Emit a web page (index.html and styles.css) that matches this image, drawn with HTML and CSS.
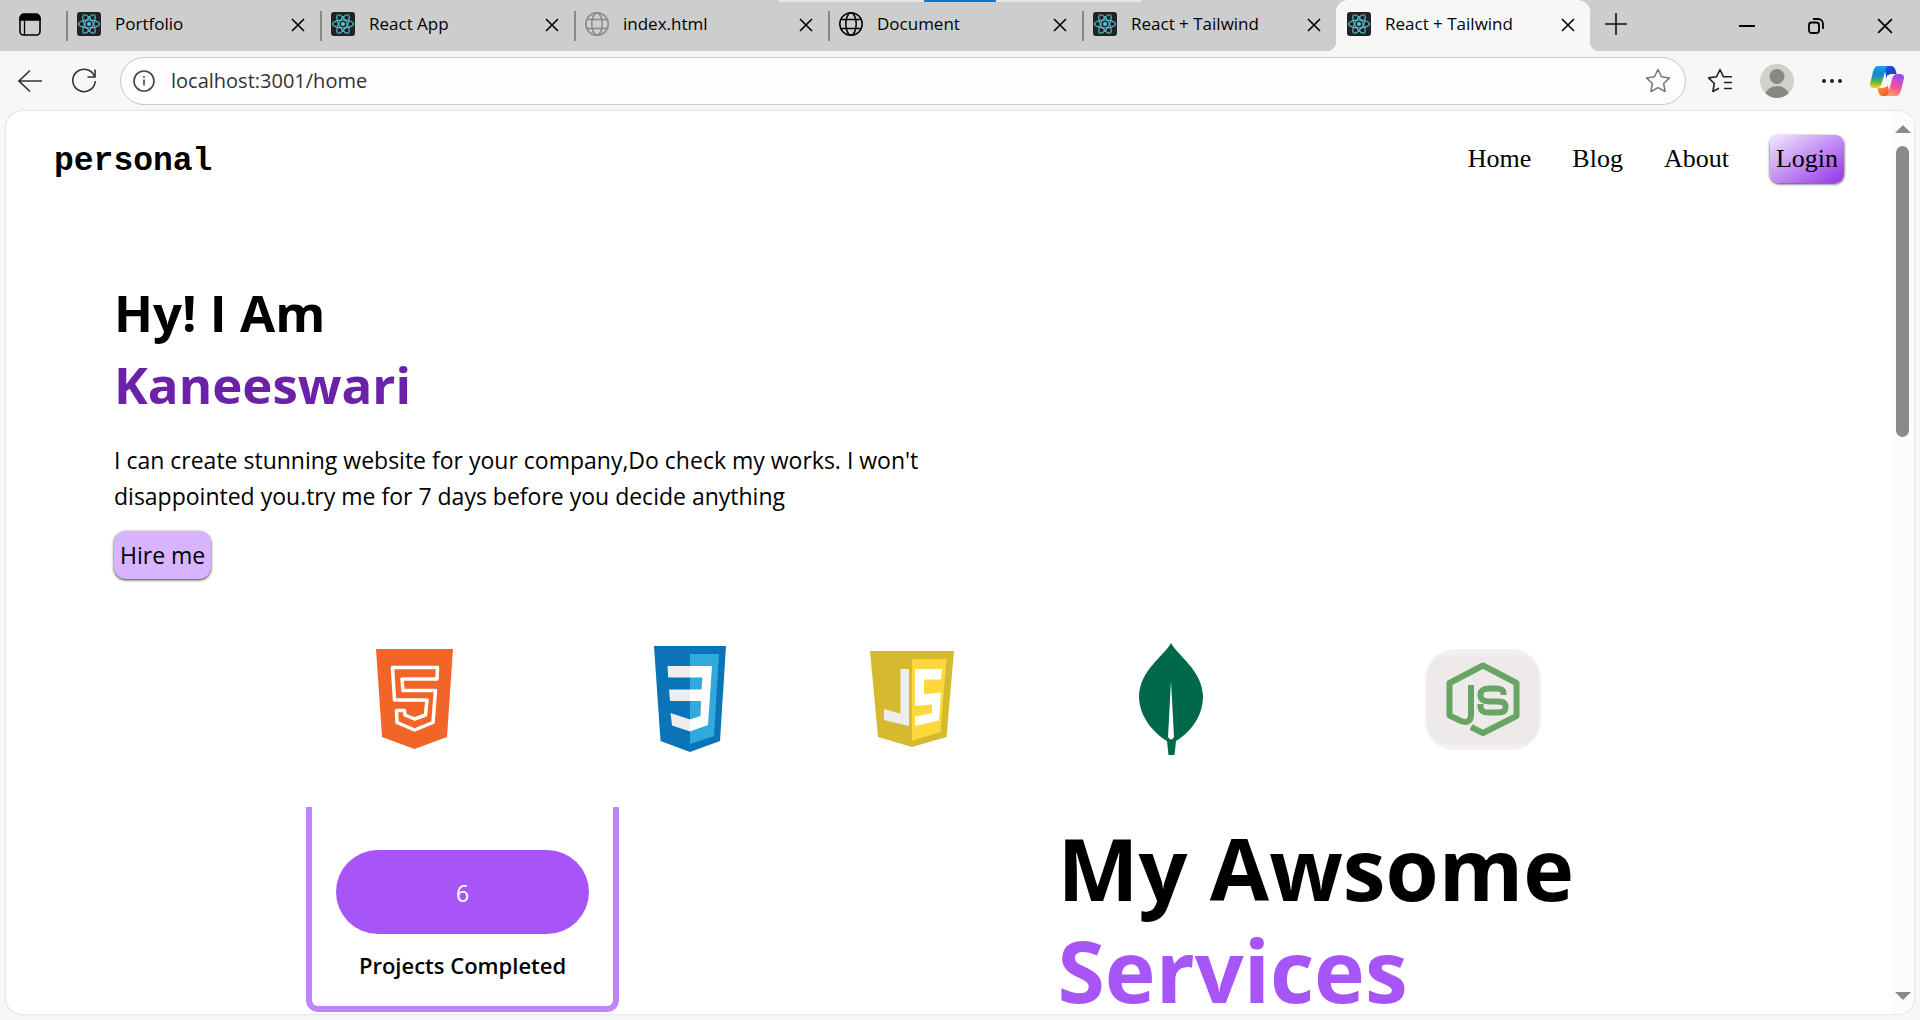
FILE: index.html
```html
<!DOCTYPE html>
<html lang="en">
<head>
<meta charset="utf-8">
<title>React + Tailwind</title>
<link rel="stylesheet" href="styles.css">
</head>
<body>
<svg class="sprite" aria-hidden="true">
  <symbol id="react" viewBox="0 0 24 24">
    <rect width="24" height="24" rx="3" fill="#222"/>
    <g fill="none" stroke="#58c4dc" stroke-width="1.1">
      <ellipse cx="12" cy="12" rx="10.4" ry="4"/>
      <ellipse cx="12" cy="12" rx="10.4" ry="4" transform="rotate(60 12 12)"/>
      <ellipse cx="12" cy="12" rx="10.4" ry="4" transform="rotate(120 12 12)"/>
    </g>
    <circle cx="12" cy="12" r="2" fill="#58c4dc"/>
  </symbol>
  <symbol id="globe" viewBox="0 0 24 24">
    <g fill="none" stroke="currentColor" stroke-width="1.5">
      <circle cx="12" cy="12" r="11.2"/>
      <ellipse cx="12" cy="12" rx="5.2" ry="11.2"/>
      <path d="M2 7.5h20M2 16.5h20"/>
    </g>
  </symbol>
  <symbol id="cross" viewBox="0 0 14 14">
    <path d="M1 1l12 12M13 1L1 13" fill="none" stroke="currentColor" stroke-width="1.6"/>
  </symbol>
</svg>

<div class="tabbar">
  <div class="load-track"><span class="load-mark"></span></div>
  <button class="bare workspace" aria-label="Tab actions">
    <svg width="22" height="24" viewBox="0 0 22 24"><rect x="1" y="2" width="20" height="20" rx="3.5" fill="none" stroke="#000" stroke-width="1.6"/><path d="M1 7V5a4 4 0 0 1 4-4h12a4 4 0 0 1 4 4v2zM5.500 7v15" stroke="#000" stroke-width="1.300"/></svg>
  </button>
  <div class="tab"><svg class="favicon"><use href="#react"/></svg><span class="tab-title">Portfolio</span><button class="bare" aria-label="Close tab"><svg class="x"><use href="#cross"/></svg></button></div>
  <div class="tab"><svg class="favicon"><use href="#react"/></svg><span class="tab-title">React App</span><button class="bare" aria-label="Close tab"><svg class="x"><use href="#cross"/></svg></button></div>
  <div class="tab"><svg class="favicon muted"><use href="#globe"/></svg><span class="tab-title">index.html</span><button class="bare" aria-label="Close tab"><svg class="x"><use href="#cross"/></svg></button></div>
  <div class="tab"><svg class="favicon"><use href="#globe"/></svg><span class="tab-title">Document</span><button class="bare" aria-label="Close tab"><svg class="x"><use href="#cross"/></svg></button></div>
  <div class="tab"><svg class="favicon"><use href="#react"/></svg><span class="tab-title">React + Tailwind</span><button class="bare" aria-label="Close tab"><svg class="x"><use href="#cross"/></svg></button></div>
  <div class="tab active"><svg class="favicon"><use href="#react"/></svg><span class="tab-title">React + Tailwind</span><button class="bare" aria-label="Close tab"><svg class="x"><use href="#cross"/></svg></button></div>
  <button class="bare new-tab" aria-label="New tab"><svg width="22" height="22" viewBox="0 0 22 22"><path d="M11 0v22M0 11h22" stroke="#111" stroke-width="1.6"/></svg></button>
  <div class="window-controls">
    <button class="bare" aria-label="Minimize"><svg width="16" height="16" viewBox="0 0 16 16"><path d="M0 8h16" stroke="#000" stroke-width="2"/></svg></button>
    <button class="bare" aria-label="Restore"><svg width="16" height="16" viewBox="0 0 16 16" fill="none" stroke="#000" stroke-width="1.800"><rect x="1" y="4.500" width="10" height="10.500" rx="2.500"/><path d="M5 1h5a5 5 0 0 1 5 5v5"/></svg></button>
    <button class="bare" aria-label="Close"><svg width="16" height="16"><use href="#cross"/></svg></button>
  </div>
</div>

<div class="toolbar">
  <button class="bare" aria-label="Back"><svg width="24" height="24" viewBox="0 0 24 24" fill="none" stroke="#333" stroke-width="1.600"><path d="M12 1.500L1 12l11 10.500M1 12h23"/></svg></button>
  <button class="bare" aria-label="Refresh"><svg width="24" height="26" viewBox="0 0 24 26" fill="none" stroke="#333" stroke-width="1.600"><path d="M22.500 8.500A11.200 11.200 0 1 0 23.200 13M23 1.500v7.500h-7.500"/></svg></button>
  <div class="omnibox">
    <svg width="22" height="22" viewBox="0 0 22 22" fill="none" stroke="#444" stroke-width="1.600"><circle cx="11" cy="11" r="10"/><path d="M11 9.500v6M11 6v1.800"/></svg>
    <input class="address" type="text" aria-label="Address" value="localhost:3001/home">
    <button class="bare" aria-label="Add to favorites"><svg width="26" height="26" viewBox="0 0 26 26"><path d="M13 1.500l3.500 7.300 8 1.100-5.800 5.600 1.400 8-7.100-3.800-7.100 3.800 1.400-8L1.500 9.900l8-1.100z" fill="none" stroke="#777" stroke-width="1.500" stroke-linejoin="round"/></svg></button>
  </div>
  <div class="toolbar-actions">
    <button class="bare" aria-label="Favorites"><svg width="24" height="26" viewBox="1 0 24 26" fill="none" stroke="#222" stroke-width="1.600" stroke-linejoin="round"><path d="M18 8.800h-1.500L13 1.500 9.500 8.800l-8 1.100 5.800 5.600-1.400 8 6-3.200M17 8.800h8M17 14.500h8M17 20.500h8"/></svg></button>
    <button class="bare" aria-label="Profile"><svg width="34" height="34" viewBox="0 0 34 34"><defs><clipPath id="face"><circle cx="17" cy="17" r="17"/></clipPath></defs><g clip-path="url(#face)"><rect width="34" height="34" fill="#d2d0cc"/><circle cx="17" cy="12.500" r="7.500" fill="#8a8886"/><ellipse cx="17" cy="32" rx="12" ry="10" fill="#8a8886"/></g></svg></button>
    <button class="bare" aria-label="Settings and more"><svg width="20" height="8" viewBox="0 0 20 8" fill="#222"><circle cx="2" cy="4" r="2"/><circle cx="10" cy="4" r="2"/><circle cx="18" cy="4" r="2"/></svg></button>
    <button class="bare" aria-label="Copilot"><svg width="34" height="30" viewBox="0 0 34 30">
      <defs>
        <linearGradient id="cpa" x1="0" y1="0" x2="0" y2="1"><stop offset="0" stop-color="#1a9cf0"/><stop offset=".4" stop-color="#1287d8"/><stop offset=".7" stop-color="#57b64f"/><stop offset="1" stop-color="#ffd500"/></linearGradient>
        <linearGradient id="cpb" x1="0.300" y1="0" x2="0" y2="1"><stop offset="0" stop-color="#a04df0"/><stop offset=".45" stop-color="#f0509a"/><stop offset="1" stop-color="#ffab5c"/></linearGradient>
        <linearGradient id="cpc" x1="0" y1="0" x2="1" y2="1"><stop offset="0" stop-color="#1e50e0"/><stop offset="1" stop-color="#1a3fb8"/></linearGradient>
        <linearGradient id="cpd" x1="0" y1="0" x2="1" y2="1"><stop offset="0" stop-color="#ffb028"/><stop offset="1" stop-color="#e8452c"/></linearGradient>
      </defs>
      <path d="M14 0h7c3 0 4 2 4.800 5l.8 3h-5c-3 0-4 2-5 5z" fill="url(#cpc)"/>
      <path d="M20 30h-7c-3 0-4-2-4.800-5L7.400 22h5c3 0 4-2 5-5z" fill="url(#cpd)"/>
      <path d="M8 0h11c-2 0-3 2-3.800 5l-3.600 13c-.8 2.600-2 4-5 4H4c-3 0-4.600-2-3.800-5l3-12C4.200 2 5.500 0 8 0z" fill="url(#cpa)"/>
      <path d="M26 30H15c2 0 3-2 3.800-5l3.600-13c.8-2.600 2-4 5-4H30c3 0 4.600 2 3.800 5l-3 12c-1 3-2.300 5-4.800 5z" fill="url(#cpb)"/>
      <path d="M17.500 9h4.500c-1.200 1-1.800 2-2.200 3.500L17 21h-4.500c1.200-1 1.700-2 2.100-3.500z" fill="#f7f7f7"/>
    </svg></button>
  </div>
</div>

<div class="viewport">
  <div class="page">
    <header class="site-header">
      <a class="brand" href="#">personal</a>
      <nav class="site-nav">
        <a href="#">Home</a>
        <a href="#">Blog</a>
        <a href="#">About</a>
        <button class="btn login">Login</button>
      </nav>
    </header>

    <section class="hero">
      <h1>Hy! I Am<br><span class="name">Kaneeswari</span></h1>
      <p>I can create stunning website for your company,Do check my works. I won't<br>disappointed you.try me for 7 days before you decide anything</p>
      <button class="btn hire">Hire me</button>
    </section>

    <ul class="skills">
      <li><svg width="77" height="100" viewBox="0 0 77 100" role="img" aria-label="HTML5"><path d="M0 0h77l-6 88-32.500 12L6 88z" fill="#f16529"/><path d="M61.500 18.500H16.500l2 32.500h32.500l-1.500 15-11 4-9.500-4-.5-4.500h-8l.5 12L38.500 81l18.500-7.500 2.500-32H27L26 30h35z" fill="none" stroke="#fff" stroke-width="3.500" stroke-linejoin="round"/></svg></li>
      <li><svg width="72" height="106" viewBox="0 0 72 106" role="img" aria-label="CSS3"><path d="M0 0h72l-6 95-30 11L6.500 95z" fill="#0b73b7"/><path d="M36 8h29l-5 82-24 8z" fill="#30a9dc"/><path d="M13.500 20H36v11.500H14.200zM15 43.500h21V55H16zM16.500 67L36 73.500v12L18 79.500z" fill="#ecedee"/><path d="M36 20h22l-4 59-18 6.500v-12L46.500 70l.5-15H36V43.500h11.500l1-12H36z" fill="#fff"/></svg></li>
      <li><svg width="84" height="96" viewBox="0 0 84 96" role="img" aria-label="JavaScript"><path d="M0 0h84l-7.500 86L42 96 8 86z" fill="#d5ba30"/><path d="M42 8h34.500l-6 73L42 89.500z" fill="#fdd83c"/><path d="M30.500 18H39v57L14 69V58l16.500 4.500z" fill="#ededed"/><path d="M45 18h27l-1 10.500H54V43l17-1.500-2 28L45 75v-9.500l17-3.500v-8.500L45 55z" fill="#fff"/></svg></li>
      <li><svg width="64" height="112" viewBox="0 0 64 112" role="img" aria-label="MongoDB"><path d="M32 0C39 13 63 27 64 53c0 22-14 37-27 45l-1.500 14h-6L28 98C15 90 0 74 0 53 1 27 25 13 32 0z" fill="#00684a"/><path d="M32 38l3 56q-3 5-6 0z" fill="#fff"/></svg></li>
      <li><svg width="116" height="101" viewBox="0 0 116 101" role="img" aria-label="Node.js"><defs><linearGradient id="tile" x1="0" y1="0" x2="0" y2="1"><stop offset="0" stop-color="#f5f2f2"/><stop offset=".07" stop-color="#edeae9"/><stop offset=".94" stop-color="#edeae9"/><stop offset="1" stop-color="#f6f4f4"/></linearGradient></defs><rect width="116" height="101" rx="29" fill="#f3f1f1"/><rect x="2" y="2" width="112" height="97" rx="27" fill="url(#tile)"/><g fill="none" stroke="#67a564" stroke-linejoin="round"><path d="M46 36v30c0 7-5 8-10 6L24.500 66.500V34L58 16.500 91.500 34v33L58 84l-12-6" stroke-width="6"/><path d="M78.500 46v-2c0-3-3-4.500-7-4.500h-6c-7 0-10 1.500-10 6.500s3 6.500 10 6.500h6c7 0 9 1 9 5.500s-2 5.500-9 5.500h-7c-6 0-9-1.500-9-6.500v-2" stroke-width="6"/></g></svg></li>
    </ul>

    <div class="lower">
      <section class="stat">
        <div class="stat-value">6</div>
        <p class="stat-label">Projects Completed</p>
      </section>
      <h2>My Awsome<br><span class="accent">Services</span></h2>
    </div>
  </div>
  <div class="scrollbar" aria-hidden="true">
    <span class="arrow up"></span>
    <span class="thumb"></span>
    <span class="arrow down"></span>
  </div>
</div>
</body>
</html>
```
FILE: styles.css
```css
* { box-sizing: border-box; }

body {
  margin: 0;
  height: 100vh;
  display: flex;
  flex-direction: column;
  overflow: hidden;
  background: #f7f7f7;
  color: #000;
  font-family: "Open Sans", "Noto Sans", sans-serif;
}

h1, h2, p, ul { margin: 0; padding: 0; }
a { color: inherit; text-decoration: none; }
button, input { font: inherit; color: inherit; }
svg { display: block; flex: none; }
.sprite { position: absolute; width: 0; height: 0; }
.bare { padding: 0; border: 0; background: none; flex: none; }

/* Tab strip */
.tabbar {
  position: relative;
  display: flex;
  align-items: center;
  height: 51px;
  background: #cdcdcd;
}
.load-track {
  position: absolute;
  top: 0;
  left: 50%;
  width: 362px;
  height: 2px;
  margin-left: -181px;
  background: #e6e6e6;
}
.load-mark {
  display: block;
  width: 72px;
  height: 2px;
  margin: 0 auto;
  background: #0078d7;
}
.workspace { width: 66px; padding: 0 0 2px 19px; }
.tab {
  position: relative;
  display: flex;
  align-items: center;
  width: 254px;
  height: 100%;
  padding: 0 15px 3px 11px;
}
.tab::before {
  content: "";
  position: absolute;
  left: 0;
  top: 11px;
  width: 2px;
  height: 30px;
  background: #888;
}
.favicon { width: 24px; height: 24px; margin-right: 14px; }
.muted { color: #888; }
.tab-title { flex: 1; font-size: 17px; line-height: 24px; white-space: nowrap; }
.x { width: 14px; height: 14px; margin-top: 2px; }
.tab.active { background: #f7f7f7; border-radius: 12px 12px 0 0; }
.tab.active::before, .tab.active::after {
  content: "";
  position: absolute;
  top: auto;
  bottom: 0;
  width: 10px;
  height: 10px;
}
.tab.active::before { left: -10px; background: radial-gradient(circle at 0 0, #cdcdcd 10px, #f7f7f7 11px); }
.tab.active::after { left: auto; right: -10px; background: radial-gradient(circle at 100% 0, #cdcdcd 10px, #f7f7f7 11px); }
.new-tab { padding: 0 0 3px 15px; }
.window-controls {
  display: flex;
  gap: 53px;
  margin-left: auto;
  padding-right: 27px;
}

/* Toolbar */
.toolbar {
  display: flex;
  align-items: center;
  gap: 30px;
  height: 60px;
  padding: 0 16px 0 18px;
}
.omnibox {
  flex: 1;
  display: flex;
  align-items: center;
  gap: 16px;
  height: 48px;
  margin-left: -6px;
  padding: 0 14px 0 12px;
  border: 1px solid #c8c8c8;
  border-radius: 24px;
  background: #fdfdfd;
}
.address {
  flex: 1;
  min-width: 0;
  padding: 0;
  border: 0;
  outline: 0;
  background: none;
  color: #333;
  font-size: 20px;
  line-height: 28px;
}
.toolbar-actions { display: flex; align-items: center; gap: 28px; margin-left: -8px; }

/* Browser viewport */
.viewport {
  flex: 1;
  min-height: 0;
  display: flex;
  margin: 0 6px 6px;
  overflow: hidden;
  border-radius: 16px;
  background: #fff;
  box-shadow: 0 0 2px #bbb;
}
.page { flex: 1; min-width: 0; }
.scrollbar {
  display: flex;
  flex-direction: column;
  align-items: center;
  width: 23px;
  padding: 14px 0;
  background: #fcfcfc;
}
.arrow { width: 0; border: 8px solid transparent; }
.up { border-top: 0; border-bottom-color: #8a8a8a; }
.down { border-bottom: 0; border-top-color: #8a8a8a; margin-top: auto; }
.thumb { width: 13px; height: 291px; margin-top: 13px; border-radius: 7px; background: #8a8a8a; }

/* Site */
.site-header {
  display: flex;
  align-items: center;
  justify-content: space-between;
  height: 96px;
  padding: 0 47px 0 48px;
}
.brand { padding-top: 6px; font: bold 33px/48px "Liberation Mono", monospace; }
.site-nav {
  display: flex;
  align-items: center;
  gap: 41px;
  font: 26px/48px "Liberation Serif", serif;
}
.btn {
  height: 48px;
  padding: 0 6px;
  border: 0;
  box-shadow: 0 1px 3px rgba(0, 0, 0, .8);
}
.login { border-radius: 9px; background: linear-gradient(to bottom right, #f3e8ff, #9333ea); }
.hire { margin-top: 17px; border-radius: 12px; background: #d8b4fe; }

.hero { padding: 69px 108px 0; font-size: 23px; line-height: 36px; }
.hero h1 { margin-bottom: 22px; font-size: 51px; line-height: 72px; font-weight: 700; }
.name { color: #6b21a8; }

.skills {
  display: grid;
  grid-template-columns: 312fr 240fr 204fr 312fr 312fr;
  place-items: center;
  padding: 64px 252px 0 252px;
  list-style: none;
}

.lower { display: grid; grid-template-columns: 1fr 1fr; align-items: start; padding-top: 52px; }
.stat {
  width: 313px;
  height: 205px;
  margin-left: 300px;
  padding: 43px 24px 0;
  border: 6px solid #c084fc;
  border-top: 0;
  border-radius: 0 0 12px 12px;
  text-align: center;
}
.stat-value {
  height: 84px;
  border-radius: 42px;
  background: #a855f7;
  color: #fff;
  font-size: 23px;
  line-height: 86px;
}
.stat-label { margin-top: 11px; font-size: 22px; line-height: 40px; font-weight: 600; }
.lower h2 { padding: 10px 0 0 109px; font-size: 86px; line-height: 102px; font-weight: 700; white-space: nowrap; }
.accent { color: #a855f7; }
```
